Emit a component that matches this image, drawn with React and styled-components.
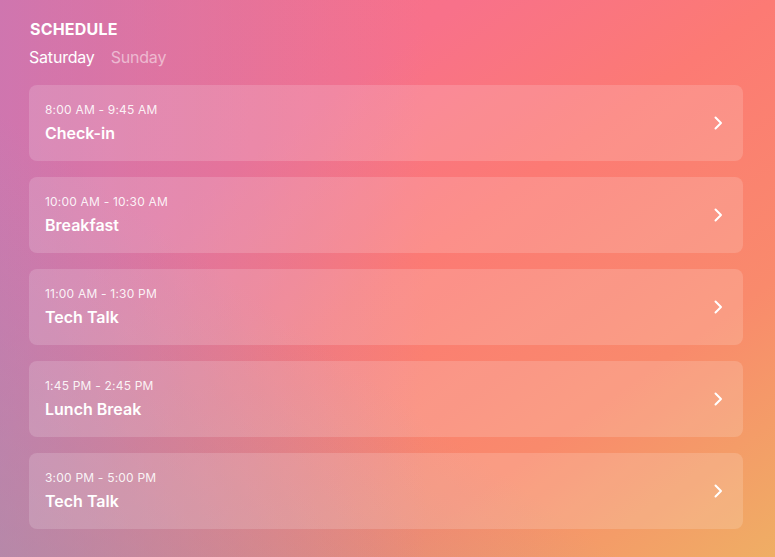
import React, { useState } from "react";
import styled, { createGlobalStyle } from "styled-components";

const GlobalStyle = createGlobalStyle`
  html, body {
    margin: 0;
    padding: 0;
    height: 100%;
  }
  body {
    font-family: Inter, "Noto Sans", "Liberation Sans", sans-serif;
    -webkit-font-smoothing: antialiased;
  }
  #root {
    min-height: 100%;
  }
`;

const Page = styled.div`
  min-height: 557px;
  box-sizing: border-box;
  padding: 19px 32px 24px 29px;
  color: #fff;
  background:
    linear-gradient(to top right, rgba(150, 155, 170, 0.45) 0%, rgba(150, 155, 170, 0) 40%),
    linear-gradient(to right, rgba(190, 120, 190, 0.7) 0%, rgba(190, 120, 190, 0) 55%),
    linear-gradient(
      to bottom right,
      #f7708c 0%,
      #f8718a 30%,
      #fc7a74 50%,
      #f98a6c 75%,
      #efae64 100%
    );
`;

const Title = styled.h1`
  margin: 0 0 0 1px;
  font-size: 16px;
  line-height: 20px;
  font-weight: 700;
  letter-spacing: 0.2px;
`;

const Tabs = styled.div`
  display: flex;
  gap: 16px;
  margin-top: 8px;
`;

const Tab = styled.button`
  border: 0;
  background: none;
  padding: 0;
  font-family: inherit;
  font-size: 16px;
  line-height: 20px;
  letter-spacing: -0.2px;
  cursor: pointer;
  color: ${(p) => (p.$active ? "#fff" : "rgba(255, 255, 255, 0.5)")};
`;

const List = styled.div`
  display: flex;
  flex-direction: column;
  gap: 16px;
  margin-top: 18px;
`;

const Card = styled.div`
  display: flex;
  align-items: center;
  justify-content: space-between;
  height: 76px;
  box-sizing: border-box;
  padding: 0 20px 0 16px;
  border-radius: 8px;
  background: rgba(255, 255, 255, 0.16);
  cursor: pointer;
`;

const Info = styled.div`
  display: flex;
  flex-direction: column;
`;

const Time = styled.span`
  font-size: 12px;
  line-height: 16px;
  letter-spacing: 0.2px;
  color: rgba(255, 255, 255, 0.9);
`;

const Name = styled.span`
  margin-top: 4px;
  font-size: 16px;
  line-height: 22px;
  font-weight: 600;
`;

const Chevron = () => (
  <svg width="10" height="16" viewBox="0 0 10 16" fill="none">
    <path
      d="M2.5 2.5 L8 8 L2.5 13.5"
      stroke="#fff"
      strokeWidth="2"
      strokeLinecap="round"
      strokeLinejoin="round"
    />
  </svg>
);

const schedule = {
  Saturday: [
    { time: "8:00 AM - 9:45 AM", name: "Check-in" },
    { time: "10:00 AM - 10:30 AM", name: "Breakfast" },
    { time: "11:00 AM - 1:30 PM", name: "Tech Talk" },
    { time: "1:45 PM - 2:45 PM", name: "Lunch Break" },
    { time: "3:00 PM - 5:00 PM", name: "Tech Talk" },
  ],
  Sunday: [],
};

export default function App() {
  const [day, setDay] = useState("Saturday");

  return (
    <Page>
      <GlobalStyle />
      <Title>SCHEDULE</Title>
      <Tabs>
        {Object.keys(schedule).map((d) => (
          <Tab key={d} $active={d === day} onClick={() => setDay(d)}>
            {d}
          </Tab>
        ))}
      </Tabs>
      <List>
        {schedule[day].map((item, i) => (
          <Card key={i}>
            <Info>
              <Time>{item.time}</Time>
              <Name>{item.name}</Name>
            </Info>
            <Chevron />
          </Card>
        ))}
      </List>
    </Page>
  );
}
